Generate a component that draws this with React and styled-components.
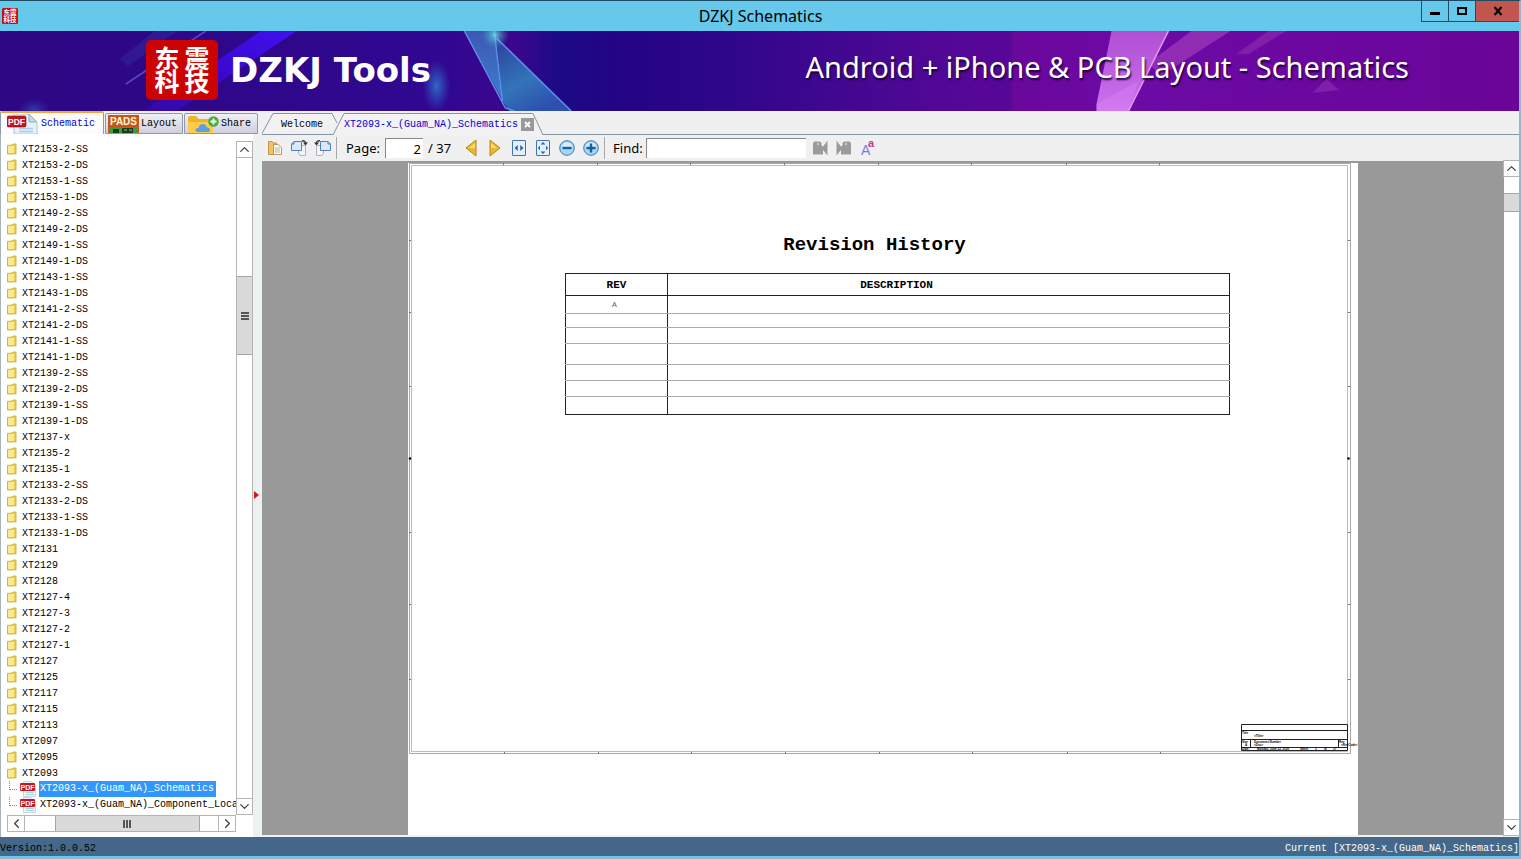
import React from "react";
import styled, { createGlobalStyle } from "styled-components";
import { FiChevronUp, FiChevronDown, FiChevronLeft, FiChevronRight } from "react-icons/fi";

const models = [
  "XT2153-2-SS", "XT2153-2-DS", "XT2153-1-SS", "XT2153-1-DS",
  "XT2149-2-SS", "XT2149-2-DS", "XT2149-1-SS", "XT2149-1-DS",
  "XT2143-1-SS", "XT2143-1-DS", "XT2141-2-SS", "XT2141-2-DS",
  "XT2141-1-SS", "XT2141-1-DS", "XT2139-2-SS", "XT2139-2-DS",
  "XT2139-1-SS", "XT2139-1-DS", "XT2137-x", "XT2135-2", "XT2135-1",
  "XT2133-2-SS", "XT2133-2-DS", "XT2133-1-SS", "XT2133-1-DS",
  "XT2131", "XT2129", "XT2128", "XT2127-4", "XT2127-3", "XT2127-2",
  "XT2127-1", "XT2127", "XT2125", "XT2117", "XT2115", "XT2113",
  "XT2097", "XT2095", "XT2093",
];

const files = ["XT2093-x_(Guam_NA)_Schematics", "XT2093-x_(Guam_NA)_Component_Location"];

const rowHeights = [18, 14, 16, 21, 16, 16, 18];

function FolderIcon() {
  return (
    <svg width="10" height="12" viewBox="0 0 10 12" aria-hidden="true">
      <path d="M0.5 2.5 L5 2 L6 1 H9 V11 H0.5 Z" fill="#e9cf5c" stroke="#c9a832" strokeWidth="0.8" />
      <path d="M1 3 H7 V10 H1 Z" fill="#faec8e" />
    </svg>
  );
}

function PdfIcon() {
  return (
    <svg width="32" height="20" viewBox="0 0 32 20" aria-hidden="true">
      <path d="M7 0 H22 L30 8 V20 H7 Z" fill="#e6f1f8" stroke="#a9c6d8" />
      <path d="M22 0 V8 H30 Z" fill="#b9dcea" stroke="#8fb3c6" />
      <path d="M12 14.500 H26 M12 17.500 H26" stroke="#a8cde6" strokeWidth="1.600" />
      <rect x="0" y="2" width="19" height="11" rx="1.500" fill="#c4161c" stroke="#8c0d12" strokeWidth="0.600" />
      <text x="9.500" y="10.500" textAnchor="middle" fontSize="8.500" fontWeight="700" fontFamily="Liberation Sans, sans-serif" fill="#fff">PDF</text>
    </svg>
  );
}

function SmallPdfIcon() {
  return (
    <svg width="16" height="16" viewBox="0 0 16 16" aria-hidden="true">
      <path d="M3.500 0.500 H11 L15.500 4.500 V15.500 H3.500 Z" fill="#edf5f9" stroke="#c3d8e2" />
      <path d="M6 11.500 H14 M6 13.500 H14" stroke="#a8d4e0" />
      <rect x="0" y="2" width="15" height="8" rx="1" fill="#c4161c" />
      <text x="7.500" y="8.500" textAnchor="middle" fontSize="7" fontWeight="700" fontFamily="Liberation Sans, sans-serif" fill="#fff">PDF</text>
    </svg>
  );
}

function PadsIcon() {
  return (
    <svg width="31" height="18" viewBox="0 0 31 18" aria-hidden="true">
      <rect width="31" height="18" fill="#c4581c" />
      <rect x="1" y="12" width="29" height="6" fill="#3f9a3a" />
      <path d="M5 14 H11 V18 H5 Z M14 13 H25 V18 H14 Z" fill="#173d1d" />
      <path d="M16 15 H19 M21 15 H24" stroke="#8fc785" />
      <text x="15.500" y="10" textAnchor="middle" fontSize="10" fontWeight="700" fontFamily="Liberation Sans, sans-serif" fill="#fff4cf">PADS</text>
    </svg>
  );
}

function ShareIcon() {
  return (
    <svg width="32" height="18" viewBox="0 0 32 18" aria-hidden="true">
      <path d="M1 3 Q1 1 3 1 H9 L12 4 H24 Q26 4 26 6 V18 H3 Q1 18 1 15 Z" fill="#f0b429" />
      <path d="M1 7 H26 V18 H3 Q1 18 1 15 Z" fill="#ffcc4a" />
      <path d="M11 17 Q8 17 8.500 14.500 Q9 12.500 11.500 13 Q12 9 16 9 Q19 9 20 12.500 Q23 12 23 15 Q23 17 21 17 Z" fill="#5aa2e4" />
      <circle cx="26.500" cy="6.500" r="5.300" fill="#43ad3f" />
      <path d="M26.500 3.500 V9.500 M23.500 6.500 H29.500" stroke="#fff" strokeWidth="1.800" />
    </svg>
  );
}

function Seal() {
  return (
    <SealArt width="72" height="60" viewBox="0 0 72 60" aria-hidden="true">
      <rect width="72" height="60" rx="5" fill="#cc0303" />
      <g fill="#fff" fontFamily="Noto Sans CJK SC, sans-serif" fontWeight="700" fontSize="25" textAnchor="middle">
        <text x="21" y="28">东</text>
        <text x="51" y="28">震</text>
        <text x="21" y="51">科</text>
        <text x="51" y="51">技</text>
      </g>
    </SealArt>
  );
}

function AppIcon() {
  return (
    <SealArt width="16" height="16" viewBox="0 0 16 16" aria-hidden="true">
      <rect width="16" height="16" rx="1.500" fill="#c40a0a" />
      <g fill="#fff" fontFamily="Noto Sans CJK SC, sans-serif" fontWeight="700" fontSize="6.500" textAnchor="middle">
        <text x="4.700" y="7.300">东</text>
        <text x="11.300" y="7.300">震</text>
        <text x="4.700" y="13.700">科</text>
        <text x="11.300" y="13.700">技</text>
      </g>
    </SealArt>
  );
}

function BannerArt() {
  return (
    <Art viewBox="0 0 1521 80" preserveAspectRatio="none" aria-hidden="true">
      <defs>
        <linearGradient id="base">
          <stop offset="0" stopColor="#2e0784" />
          <stop offset="0.29" stopColor="#300790" />
          <stop offset="0.34" stopColor="#3c078c" />
          <stop offset="0.365" stopColor="#1d0a86" />
          <stop offset="0.4" stopColor="#220583" />
          <stop offset="0.48" stopColor="#2f068a" />
          <stop offset="0.58" stopColor="#480892" />
          <stop offset="0.64" stopColor="#560797" />
          <stop offset="0.665" stopColor="#560797" />
          <stop offset="0.667" stopColor="#6a079b" />
          <stop offset="0.75" stopColor="#6c0aa5" />
          <stop offset="1" stopColor="#6a0598" />
        </linearGradient>
        <linearGradient id="beam" x1="1" y1="0" x2="0" y2="1">
          <stop offset="0" stopColor="#4010ee" />
          <stop offset="0.5" stopColor="#3a08d0" />
          <stop offset="1" stopColor="#3c0cc4" stopOpacity="0.5" />
        </linearGradient>
        <linearGradient id="glass" x1="0" y1="0" x2="0" y2="1">
          <stop offset="0" stopColor="#3d58b4" />
          <stop offset="1" stopColor="#3a7fc8" />
        </linearGradient>
        <linearGradient id="shard" x1="0" y1="0" x2="0.600" y2="1">
          <stop offset="0" stopColor="#2b3f9c" />
          <stop offset="0.600" stopColor="#3374b8" />
          <stop offset="1" stopColor="#2d4fae" />
        </linearGradient>
        <linearGradient id="pink" x1="0" y1="0" x2="0" y2="1">
          <stop offset="0" stopColor="#b04fd4" />
          <stop offset="1" stopColor="#ca72ee" />
        </linearGradient>
        <radialGradient id="glow">
          <stop offset="0" stopColor="#2f74cc" stopOpacity="0.9" />
          <stop offset="1" stopColor="#2f5cc8" stopOpacity="0" />
        </radialGradient>
        <radialGradient id="spark">
          <stop offset="0" stopColor="#6ef0e0" />
          <stop offset="1" stopColor="#3a8fc8" stopOpacity="0" />
        </radialGradient>
      </defs>
      <rect width="1521" height="80" fill="url(#base)" />
      <path d="M261 0 H297 L177 80 H143 Z" fill="url(#beam)" />
      <path d="M155 0 H178 L128 35 L120 28 Z" fill="#4152b8" opacity="0.22" />
      <path d="M206 0 L126 53" stroke="#6a66d8" strokeWidth="1.500" opacity="0.7" />
      <ellipse cx="34" cy="78" rx="16" ry="10" fill="url(#glow)" opacity="0.5" />
      <ellipse cx="437" cy="55" rx="14" ry="26" fill="url(#glow)" />
      <path d="M465 0 H495 L502 67 Z" fill="url(#glass)" />
      <path d="M497 7 L572 80 H510 L503 70 Z" fill="url(#shard)" />
      <path d="M465 0 L506 77 L515 80 M495 0 L503 70 M497 7 L572 80" fill="none" stroke="#5f8fee" strokeWidth="1.500" />
      <circle cx="496" cy="4" r="14" fill="url(#spark)" opacity="0.8" />
      <path d="M1193 0 H1232 L1162 45 L1150 32 Z" fill="#9b35b8" opacity="0.8" />
      <path d="M1270 0 H1288 L1250 23 H1238 Z" fill="#8a28ae" opacity="0.7" />
      <path d="M1328 48 L1341 59 L1314 62 Z" fill="#8527ae" opacity="0.8" />
      <path d="M1113 0 H1170 L1130 80 H1098 V73 Z" fill="url(#pink)" />
      <path d="M1098 73 L1140 50 L1130 80 H1098 Z" fill="#d57ff4" opacity="0.5" />
      <path d="M1170 0 L1130 80" stroke="#e29af5" strokeWidth="1.500" />
    </Art>
  );
}

function OpenIcon() {
  return (
    <svg width="16" height="16" viewBox="0 0 16 16" aria-hidden="true">
      <path d="M1.500 1.500 H5 L6 3 H9.500 V14.500 H1.500 Z" fill="#f2c268" stroke="#c8924a" />
      <path d="M6.500 4.500 H11 L14.500 7.500 V14.500 H6.500 Z" fill="#fffdf4" stroke="#b39a6a" />
      <path d="M8 8 H13 M8 10 H13 M8 12 H13" stroke="#b8b096" />
    </svg>
  );
}

function RotateIcon({ flip }) {
  return (
    <svg width="18" height="16" viewBox="0 0 18 16" aria-hidden="true">
      <g transform={flip ? "translate(18 0) scale(-1 1)" : undefined}>
        <path d="M8.500 5.500 H15.500 V15.500 H10 L8.500 13 Z" fill="#f4f5f8" stroke="#adb4c0" />
        <path d="M4 1.500 H11.500 V10.500 H1.500 V4 Z" fill="#d9e9fa" stroke="#537fb4" />
        <path d="M1.500 4 H4 V1.500" fill="none" stroke="#537fb4" />
        <path d="M12 0.800 Q15.500 0.500 15.500 3" fill="none" stroke="#333" strokeWidth="1.300" />
        <path d="M13 2.500 H18 L15.500 5.500 Z" fill="#333" />
      </g>
    </svg>
  );
}

function ArrowIcon({ next }) {
  return (
    <svg width="12" height="18" viewBox="0 0 12 18" aria-hidden="true">
      <path d={next ? "M1 1 V17 L11 9 Z" : "M11 1 V17 L1 9 Z"} fill="#e8b92f" stroke="#b98719" strokeLinejoin="round" />
      <path d={next ? "M2 4 L8 9 H2 Z" : "M10 4 L4 9 H10 Z"} fill="#f8da77" />
    </svg>
  );
}

function FitIcon({ page }) {
  return (
    <svg width="14" height="16" viewBox="0 0 14 16" aria-hidden="true">
      <rect x="0.500" y="0.500" width="13" height="15" rx="0.500" fill="#e3effc" stroke="#4474b0" />
      {page ? (
        <path d="M7 2 L9.500 4.500 H4.500 Z M7 14 L9.500 11.500 H4.500 Z M1.800 8 L4 5.800 V10.200 Z M12.200 8 L10 5.800 V10.200 Z" fill="#2766b4" />
      ) : (
        <path d="M2.500 8 L5.800 5 V11 Z M11.500 8 L8.200 5 V11 Z" fill="#2766b4" />
      )}
    </svg>
  );
}

function ZoomIcon({ plus }) {
  return (
    <svg width="16" height="16" viewBox="0 0 16 16" aria-hidden="true">
      <circle cx="8" cy="8" r="7.300" fill="#a7d5f5" stroke="#3c7ab2" />
      <path d="M2.500 7 Q3.500 2.500 8 2.500 Q12.500 2.500 13.500 7 Z" fill="#d6edfc" />
      <path d={plus ? "M3.500 8 H12.500 M8 3.500 V12.500" : "M3.500 8 H12.500"} stroke="#17609f" strokeWidth="2.400" />
    </svg>
  );
}

function FindIcon({ next }) {
  return (
    <svg width="16" height="16" viewBox="0 0 16 16" aria-hidden="true">
      <g transform={next ? "translate(16 0) scale(-1 1)" : undefined} fill="#9b9b9b">
        <path d="M1 3 L2.500 1.500 H8 L9.500 3 V5.500 L11 6.500 L15.500 0.500 V15.500 L11 10 V14.500 H1 Z" />
        <circle cx="6" cy="4" r="1" fill="#d8d8d8" />
      </g>
    </svg>
  );
}

function CaseIcon() {
  return (
    <svg width="16" height="16" viewBox="0 0 16 16" aria-hidden="true">
      <text x="1" y="15" fontFamily="Liberation Sans, sans-serif" fontSize="14" fill="#7d78e6">A</text>
      <text x="8" y="7" fontFamily="Liberation Sans, sans-serif" fontSize="11" fontWeight="700" fill="#c23a92">a</text>
    </svg>
  );
}

// Sheet border with its zone marks
function SheetFrame() {
  const across = [95, 189, 282, 376, 470, 563, 658, 751];
  const down = [77, 149, 223, 369, 441, 516];
  return (
    <FrameArt width="950" height="594" viewBox="0 0 950 594" aria-hidden="true">
      <g fill="none" stroke="#a9a9a9">
        <path d="M1.500 0.500 H942.500 V590.500 H1.500 Z" />
        <path d="M3.500 2.500 H939.500 V588.500 H3.500 Z" stroke="#bcbcbc" />
        {across.map((x) => (
          <path key={x} d={`M${x + 0.5} 0 V2 M${x + 1.5} 589 V591`} stroke="#777" />
        ))}
        {down.map((y) => (
          <path key={y} d={`M1 ${y + 0.5} H3 M940 ${y + 0.5} H942`} stroke="#777" />
        ))}
      </g>
      <circle cx="2" cy="295.500" r="1.300" />
      <circle cx="940.500" cy="295.500" r="1.300" />
      <g fill="none" stroke="#222">
        <path d="M833.500 561.500 H939.500 V587.500 H833.500 Z M833.500 567.500 H939.500 M833.500 576.500 H939.500 M833.500 584.500 H939.500 M842.500 576.500 V584.500 M930.500 576.500 V584.500" />
      </g>
      <g fontFamily="Liberation Sans, sans-serif" fontSize="3" fontWeight="700">
        <text x="834" y="570.500">Title</text>
        <text x="846" y="573.500">&lt;Title&gt;</text>
        <text x="834" y="579.500">Size</text>
        <text x="837" y="582.500">A</text>
        <text x="846" y="579.500">Document Number</text>
        <text x="846" y="582.500">&lt;Doc&gt;</text>
        <text x="931" y="579.500">Rev</text>
        <text x="933" y="582.500">&lt;RevCode&gt;</text>
        <text x="834" y="587">Date:</text>
        <text x="849" y="587">Monday, June 22, 2020</text>
        <text x="892" y="587">Sheet</text>
        <text x="907" y="587">2</text>
        <text x="916" y="587">of</text>
        <text x="925" y="587">37</text>
      </g>
    </FrameArt>
  );
}

export default function App() {
  return (
    <Window>
      <GlobalStyle />
      <TitleBar>
        <AppIcon />
        <h1>DZKJ Schematics</h1>
        <WindowButtons>
          <WindowButton aria-label="Minimize">
            <svg width="10" height="10" viewBox="0 0 10 10"><path d="M0 7.500 H10" stroke="#000" strokeWidth="3" /></svg>
          </WindowButton>
          <WindowButton aria-label="Maximize">
            <svg width="10" height="10" viewBox="0 0 10 10"><path d="M1 2 H9 V8 H1 Z" fill="none" stroke="#000" strokeWidth="2" /></svg>
          </WindowButton>
          <WindowButton $close aria-label="Close">
            <svg width="10" height="10" viewBox="0 0 10 10"><path d="M1.500 1 L8.500 9 M8.500 1 L1.500 9" stroke="#000" strokeWidth="2.200" /></svg>
          </WindowButton>
        </WindowButtons>
      </TitleBar>

      <Banner>
        <BannerArt />
        <Brand>
          <Seal />
          <strong>DZKJ Tools</strong>
        </Brand>
        <Slogan>Android + iPhone &amp; PCB Layout - Schematics</Slogan>
      </Banner>

      <Body>
        <Sidebar>
          <SideTabs>
            <SideTab $active $width="104px"><PdfIcon />Schematic</SideTab>
            <SideTab $width="78px"><PadsIcon />Layout</SideTab>
            <SideTab $width="74px"><ShareIcon />Share</SideTab>
          </SideTabs>
          <TreePane>
            <Tree>
              {models.map((name) => (
                <TreeRow key={name}><FolderIcon />{name}</TreeRow>
              ))}
              {files.map((name, i) => (
                <FileRow key={name}>
                  <Branch />
                  <SmallPdfIcon />
                  <FileName $selected={i === 0}>{name}</FileName>
                </FileRow>
              ))}
            </Tree>
            <VBar>
              <BarButton aria-label="Scroll tree up"><FiChevronUp /></BarButton>
              <Track $grow={119} />
              <VThumb $grow={77}><Grip /></VThumb>
              <Track $grow={444} />
              <BarButton aria-label="Scroll tree down"><FiChevronDown /></BarButton>
            </VBar>
            <HBar>
              <BarButton $side aria-label="Scroll tree left"><FiChevronLeft /></BarButton>
              <Track $grow={31} />
              <HThumb $grow={145}><Grip $upright /></HThumb>
              <Track $grow={19} />
              <BarButton $side aria-label="Scroll tree right"><FiChevronRight /></BarButton>
            </HBar>
          </TreePane>
        </Sidebar>
        <Splitter aria-label="Collapse panel">
          <svg width="5" height="8" viewBox="0 0 5 8"><path d="M0 0 L5 4 L0 8 Z" fill="#d8141c" /></svg>
        </Splitter>

        <Viewer>
          <DocTabs>
            <DocTab $width="76px">
              <svg viewBox="0 0 76 23" preserveAspectRatio="none" aria-hidden="true"><path d="M0 22.500 L11 2.500 H70 L75 12" fill="#f2f2f2" stroke="#8594a3" /></svg>
              <span>Welcome</span>
            </DocTab>
            <DocTab $active $width="206px">
              <svg viewBox="0 0 206 24" preserveAspectRatio="none" aria-hidden="true"><path d="M-5 24 L6 2.500 H195 L205 24" fill="#f2f2f2" stroke="#8594a3" /></svg>
              <span>XT2093-x_(Guam_NA)_Schematics</span>
              <CloseTab aria-label="Close tab">
                <svg width="7" height="7" viewBox="0 0 7 7"><path d="M1 1 L6 6 M6 1 L1 6" stroke="#fff" strokeWidth="1.800" /></svg>
              </CloseTab>
            </DocTab>
          </DocTabs>
          <Toolbar>
            <ToolGroup>
              <Tool aria-label="Open"><OpenIcon /></Tool>
              <Tool aria-label="Rotate right"><RotateIcon /></Tool>
              <Tool aria-label="Rotate left"><RotateIcon flip /></Tool>
            </ToolGroup>
            <ToolGroup>
              <PageField>
                <label htmlFor="page">Page:</label>
                <input id="page" defaultValue="2" />
                <span>/ 37</span>
              </PageField>
              <Tool aria-label="Previous page"><ArrowIcon /></Tool>
              <Tool aria-label="Next page"><ArrowIcon next /></Tool>
              <Tool aria-label="Fit width"><FitIcon /></Tool>
              <Tool aria-label="Fit page"><FitIcon page /></Tool>
              <Tool aria-label="Zoom out"><ZoomIcon /></Tool>
              <Tool aria-label="Zoom in"><ZoomIcon plus /></Tool>
            </ToolGroup>
            <ToolGroup>
              <FindField>
                <label htmlFor="find">Find:</label>
                <input id="find" />
              </FindField>
              <Tool aria-label="Find previous"><FindIcon /></Tool>
              <Tool aria-label="Find next"><FindIcon next /></Tool>
              <Tool aria-label="Match case"><CaseIcon /></Tool>
            </ToolGroup>
          </Toolbar>
          <Document>
            <Canvas>
              <Sheet>
                <SheetFrame />
                <h2>Revision History</h2>
                <RevTable>
                  <thead>
                    <tr><th>REV</th><th>DESCRIPTION</th></tr>
                  </thead>
                  <tbody>
                    {rowHeights.map((height, i) => (
                      <RevRow key={i} $height={height}>
                        <td>{i === 0 ? "A" : ""}</td>
                        <td />
                      </RevRow>
                    ))}
                  </tbody>
                </RevTable>
              </Sheet>
            </Canvas>
            <DocBar>
              <BarButton aria-label="Scroll page up"><FiChevronUp /></BarButton>
              <Track $grow={17} />
              <VThumb $grow={17} />
              <Track $grow={608} />
              <BarButton aria-label="Scroll page down"><FiChevronDown /></BarButton>
            </DocBar>
          </Document>
        </Viewer>
      </Body>

      <StatusBar>
        <span>Version:1.0.0.52</span>
        <Current>Current [XT2093-x_(Guam_NA)_Schematics]</Current>
      </StatusBar>
    </Window>
  );
}

const mono = `"Liberation Mono", monospace`;
const sans = `"Noto Sans", "Open Sans", sans-serif`;

const GlobalStyle = createGlobalStyle`
  * {
    box-sizing: border-box;
  }

  body {
    margin: 0;
    font-family: ${mono};
    font-size: 10px;
    color: #000;
  }

  button {
    padding: 0;
    border: 0;
    background: none;
    font: inherit;
    color: inherit;
  }

  svg {
    display: block;
    flex: none;
  }
`;

const Window = styled.div`
  display: flex;
  flex-direction: column;
  height: 100vh;
  background: #f0f0f0;
  border-top: 1px solid #1d4a63;
  border-right: 2px solid #66c8ea;
  border-bottom: 3px solid #66c8ea;
  overflow: hidden;
`;

const TitleBar = styled.header`
  display: grid;
  grid-template-columns: 1fr auto 1fr;
  align-items: center;
  flex: none;
  height: 30px;
  padding-left: 2px;
  background: #66c8ea;

  h1 {
    margin: 0;
    font-family: ${sans};
    font-size: 16px;
    line-height: 20px;
    font-weight: 400;
  }
`;

const WindowButtons = styled.div`
  display: flex;
  align-self: start;
  justify-self: end;
  height: 21px;
  border-left: 1px solid #234d60;
  border-bottom: 1px solid #234d60;
`;

const WindowButton = styled.button`
  display: flex;
  align-items: center;
  justify-content: center;
  width: ${(p) => (p.$close ? "43px" : "27px")};
  border-right: ${(p) => (p.$close ? "0" : "1px solid #234d60")};
  background: ${(p) => (p.$close ? "#c2564f" : "transparent")};
`;

const SealArt = styled.svg`
  overflow: visible;
`;

const Banner = styled.div`
  position: relative;
  display: flex;
  align-items: center;
  justify-content: space-between;
  flex: none;
  height: 80px;
  padding: 0 110px 0 146px;
  color: #fff;
  font-family: ${sans};
`;

const Art = styled.svg`
  position: absolute;
  inset: 0;
  width: 100%;
  height: 100%;
`;

const Brand = styled.div`
  position: relative;
  display: flex;
  align-items: center;
  gap: 12px;
  padding-bottom: 2px;

  strong {
    font-family: "DejaVu Sans", sans-serif;
    font-size: 34px;
    line-height: 60px;
  }
`;

const Slogan = styled.div`
  position: relative;
  padding-bottom: 10px;
  font-size: 29px;
  text-shadow: 1px 2px 2px #1b0038;
`;

const Body = styled.main`
  display: flex;
  flex: 1;
  min-height: 0;
`;

const Sidebar = styled.aside`
  display: flex;
  flex-direction: column;
  flex: none;
  width: 253px;
`;

const SideTabs = styled.div`
  display: flex;
  align-items: flex-end;
  gap: 1px;
  height: 23px;
`;

const SideTab = styled.button`
  display: flex;
  align-items: center;
  gap: 2px;
  flex: none;
  width: ${(p) => p.$width};
  height: ${(p) => (p.$active ? "23px" : "21px")};
  padding-left: ${(p) => (p.$active ? "6px" : "2px")};
  border: 1px solid #8c9aab;
  border-bottom: ${(p) => (p.$active ? "0" : "1px solid #8c9aab")};
  border-top: ${(p) => (p.$active ? "2px solid #f5a33c" : "1px solid #8c9aab")};
  border-radius: 2px 2px 0 0;
  background: ${(p) => (p.$active ? "#fcfcfc" : "linear-gradient(#f0f0f5, #cfcfdf)")};
  color: ${(p) => (p.$active ? "#0000d8" : "#000")};
`;

const TreePane = styled.div`
  display: grid;
  grid-template-columns: minmax(0, 1fr) 17px;
  grid-template-rows: minmax(0, 1fr) 17px;
  flex: 1;
  min-height: 0;
  padding: 7px 0 5px 6px;
  border-left: 1px solid #a9b1b9;
  background: #fff;
`;

const Tree = styled.ul`
  margin: 0;
  padding: 0;
  list-style: none;
  overflow: hidden;
`;

const TreeRow = styled.li`
  display: flex;
  align-items: center;
  gap: 5px;
  height: 16px;
  white-space: nowrap;
`;

const FileRow = styled(TreeRow)`
  gap: 3px;
`;

const Branch = styled.span`
  flex: none;
  align-self: flex-start;
  width: 8px;
  height: 9px;
  margin-left: 2px;
  border-left: 1px dotted #888;
  border-bottom: 1px dotted #888;
`;

const FileName = styled.span`
  padding: 0 2px 0 1px;
  line-height: 16px;
  outline: 1px dotted ${(p) => (p.$selected ? "#c87814" : "transparent")};
  outline-offset: -1px;
  background: ${(p) => (p.$selected ? "#3296fa" : "transparent")};
  color: ${(p) => (p.$selected ? "#fff" : "#000")};
`;

const VBar = styled.div`
  display: flex;
  flex-direction: column;
  border: 1px solid #b4b4b4;
`;

const HBar = styled.div`
  display: flex;
  border: 1px solid #b4b4b4;
`;

const BarButton = styled.button`
  display: flex;
  align-items: center;
  justify-content: center;
  flex: none;
  width: ${(p) => (p.$side ? "16px" : "auto")};
  height: ${(p) => (p.$side ? "auto" : "15px")};
  font-size: 15px;
  color: #404040;
  box-shadow: 0 0 0 1px #b4b4b4;
`;

const Track = styled.div`
  flex: ${(p) => p.$grow} 1 0;
`;

const VThumb = styled.div`
  display: flex;
  align-items: center;
  justify-content: center;
  flex: ${(p) => p.$grow} 1 0;
  border: solid #a6a6a6;
  border-width: 1px 0;
  background: #dadada;
`;

const HThumb = styled(VThumb)`
  border-width: 0 1px;
`;

const Grip = styled.span`
  width: 8px;
  height: 8px;
  background: repeating-linear-gradient(
    ${(p) => (p.$upright ? "90deg" : "180deg")},
    #555 0 2px,
    transparent 2px 3px
  );
`;

const Splitter = styled.button`
  display: flex;
  align-items: center;
  flex: none;
  width: 9px;
  padding: 18px 0 0 1px;
  margin-top: 23px;
  background: #eef1f1;
`;

const Viewer = styled.section`
  display: flex;
  flex-direction: column;
  flex: 1;
  min-width: 0;
`;

const DocTabs = styled.div`
  display: flex;
  flex: none;
  height: 24px;
  border-bottom: 1px solid #8594a3;
`;

const DocTab = styled.button`
  position: relative;
  display: flex;
  align-items: center;
  gap: 3px;
  width: ${(p) => p.$width};
  height: ${(p) => (p.$active ? "24px" : "23px")};
  padding: ${(p) => (p.$active ? "3px 0 0 6px" : "4px 0 0 19px")};
  color: ${(p) => (p.$active ? "#0000d8" : "#000")};

  > svg {
    position: absolute;
    inset: 0;
    width: 100%;
    height: 100%;
    overflow: visible;
  }

  span {
    position: relative;
  }
`;

const CloseTab = styled.i`
  position: relative;
  display: flex;
  align-items: center;
  justify-content: center;
  width: 13px;
  height: 13px;
  background: #999;
`;

const Toolbar = styled.div`
  display: flex;
  align-items: center;
  flex: none;
  height: 26px;
  font-family: ${sans};
  font-size: 13px;
`;

const ToolGroup = styled.div`
  display: flex;
  align-items: center;
  height: 22px;
  padding: 0 1px;

  & + & {
    border-left: 1px solid #a8a8a8;
  }
`;

const Tool = styled.button`
  display: flex;
  align-items: center;
  justify-content: center;
  width: 24px;
  height: 22px;
`;

const PageField = styled.div`
  display: flex;
  align-items: center;
  gap: 5px;
  padding: 0 8px;

  input {
    width: 38px;
    height: 20px;
    padding: 0 2px;
    border: 0;
    border-top: 1px solid #888;
    border-left: 1px solid #888;
    background: #fff;
    font: inherit;
    text-align: right;
  }
`;

const FindField = styled(PageField)`
  gap: 3px;
  padding: 0 2px 0 7px;

  input {
    width: 160px;
    text-align: left;
  }
`;

const Document = styled.div`
  display: flex;
  flex: 1;
  min-height: 0;
  padding-bottom: 2px;
`;

const Canvas = styled.div`
  display: flex;
  justify-content: center;
  flex: 1;
  min-width: 0;
  padding-top: 2px;
  background: #999;
  overflow: hidden;
`;

const Sheet = styled.article`
  position: relative;
  display: flex;
  flex-direction: column;
  flex: none;
  width: 950px;
  padding: 72px 128px 0 157px;
  background: #fff;

  h2 {
    margin: 0 0 18px;
    padding-right: 46px;
    font-size: 19px;
    line-height: 20px;
    text-align: center;
  }
`;

const FrameArt = styled.svg`
  position: absolute;
  top: 0;
  left: 0;
`;

const RevTable = styled.table`
  position: relative;
  width: 100%;
  border: 1px solid #222;
  border-collapse: collapse;
  table-layout: fixed;

  th {
    height: 22px;
    padding: 0;
    border: 1px solid #222;
    font-size: 11px;
  }

  th:first-child {
    width: 102px;
  }

  th:last-child {
    padding-right: 104px;
  }
`;

const RevRow = styled.tr`
  height: ${(p) => p.$height}px;

  td {
    padding: 0 4px 0 0;
    border-right: 1px solid #222;
    border-bottom: 1px solid #aaa;
    color: #666;
    font-size: 8px;
    line-height: 10px;
    text-align: center;
  }

  &:last-child td {
    border-bottom-color: #222;
  }
`;

const DocBar = styled.div`
  display: flex;
  flex-direction: column;
  flex: none;
  width: 15px;
  background: #fff;
`;

const StatusBar = styled.footer`
  display: flex;
  align-items: flex-end;
  justify-content: space-between;
  flex: none;
  height: 19px;
  background: #44678a;
  line-height: 14px;
`;

const Current = styled.span`
  color: #fff;
`;
